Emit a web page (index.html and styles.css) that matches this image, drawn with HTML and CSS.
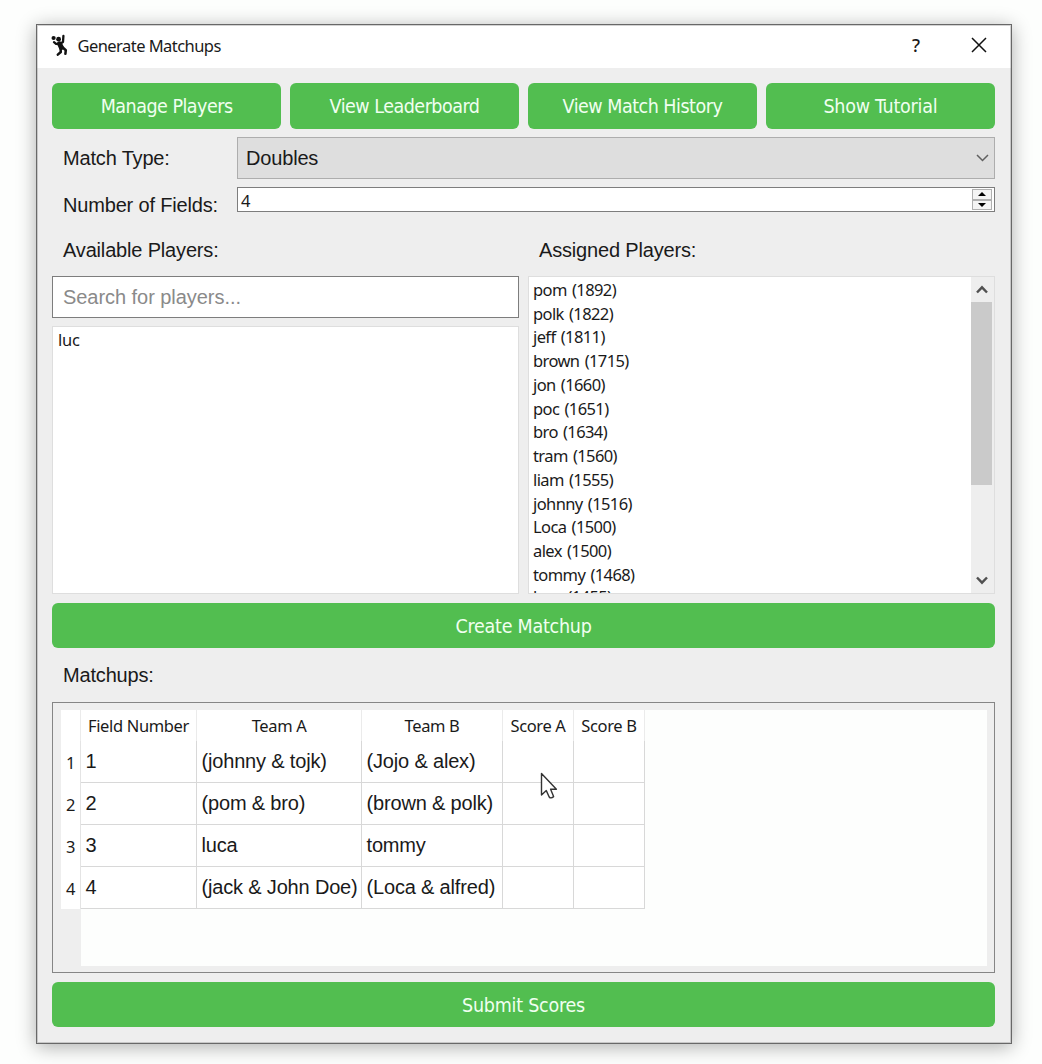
FILE: index.html
```html
<!DOCTYPE html>
<html lang="en">
<head>
<meta charset="utf-8">
<title>Generate Matchups</title>
<link rel="stylesheet" href="styles.css">
</head>
<body>
<main class="window">
  <header class="titlebar">
    <svg class="app-icon" width="18" height="23" viewBox="0 0 18 23" fill="none" stroke="#111" stroke-linecap="round" stroke-linejoin="round">
      <circle cx="2.6" cy="4" r="2.1" fill="#111" stroke="none"/>
      <circle cx="7.6" cy="5.2" r="2.4" fill="#111" stroke="none"/>
      <path d="M3 8.2 5 9.8 8.5 10 12 8 12.4 2" stroke-width="2.3"/>
      <path d="M8.6 9.8 10.4 13.6" stroke-width="5"/>
      <path d="M9.6 14.5 9.8 18 6.8 20.6M11.8 13.5 14.8 16.2 14.4 19.8" stroke-width="2.5"/>
    </svg>
    <h1 class="title">Generate Matchups</h1>
    <span class="help">?</span>
    <svg class="close" width="16" height="16" viewBox="0 0 16 16" fill="none" stroke="#111" stroke-width="1.5"><path d="M1 1 15 15M15 1 1 15"/></svg>
  </header>
  <div class="content">
    <nav class="toolbar">
      <button class="btn">Manage Players</button>
      <button class="btn">View Leaderboard</button>
      <button class="btn">View Match History</button>
      <button class="btn wide">Show Tutorial</button>
    </nav>
    <div class="form">
      <span class="label">Match Type:</span>
      <div class="combo"><span>Doubles</span>
        <svg width="13" height="8" viewBox="0 0 13 8" fill="none" stroke="#606060" stroke-width="1.5"><path d="M1 1 6.5 6.5 12 1"/></svg>
      </div>
      <span class="label label-fields">Number of Fields:</span>
      <div class="spin"><span>4</span>
        <div class="steps">
          <i><svg width="8" height="4" viewBox="0 0 8 4"><path d="M0 4 4 0 8 4Z"/></svg></i>
          <i><svg width="8" height="4" viewBox="0 0 8 4"><path d="M0 0 4 4 8 0Z"/></svg></i>
        </div>
      </div>
    </div>
    <div class="players">
      <section class="available">
        <h2 class="label">Available Players:</h2>
        <div class="search">Search for players...</div>
        <ul class="list"><li>luc</li></ul>
      </section>
      <section class="assigned">
        <h2 class="label">Assigned Players:</h2>
        <div class="list-box">
          <ul class="list">
            <li>pom (1892)</li><li>polk (1822)</li><li>jeff (1811)</li><li>brown (1715)</li><li>jon (1660)</li><li>poc (1651)</li><li>bro (1634)</li><li>tram (1560)</li><li>liam (1555)</li><li>johnny (1516)</li><li>Loca (1500)</li><li>alex (1500)</li><li>tommy (1468)</li><li class="partial">luca (1455)</li>
          </ul>
          <div class="scrollbar">
            <svg width="12" height="9" viewBox="0 0 12 9" fill="none" stroke="#505050" stroke-width="2.4"><path d="M1 7.5 6 2.3 11 7.5"/></svg>
            <div class="track"><div class="thumb"></div></div>
            <svg width="12" height="9" viewBox="0 0 12 9" fill="none" stroke="#505050" stroke-width="2.4"><path d="M1 1.5 6 6.7 11 1.5"/></svg>
          </div>
        </div>
      </section>
    </div>
    <button class="btn b-create wide">Create Matchup</button>
    <h2 class="label matchups-label">Matchups:</h2>
    <div class="table-frame">
      <div class="table-view">
        <table>
          <colgroup><col class="c-row"><col class="c-field"><col class="c-a"><col class="c-b"><col class="c-score"><col class="c-score"></colgroup>
          <thead><tr><th></th><th>Field Number</th><th>Team A</th><th>Team B</th><th>Score A</th><th>Score B</th></tr></thead>
          <tbody>
            <tr><th>1</th><td>1</td><td>(johnny &amp; tojk)</td><td>(Jojo &amp; alex)</td><td></td><td></td></tr>
            <tr><th>2</th><td>2</td><td>(pom &amp; bro)</td><td>(brown &amp; polk)</td><td></td><td></td></tr>
            <tr><th>3</th><td>3</td><td>luca</td><td>tommy</td><td></td><td></td></tr>
            <tr><th>4</th><td>4</td><td>(jack &amp; John Doe)</td><td>(Loca &amp; alfred)</td><td></td><td></td></tr>
          </tbody>
        </table>
        <div class="below"></div>
      </div>
    </div>
    <button class="btn b-submit wide">Submit Scores</button>
  </div>
</main>
<svg class="cursor" width="18" height="28" viewBox="0 0 18 28"><path d="M1.5 1.5V23L6.3 18.6 9.2 25Q10.8 27 13.6 24.6L10.6 17.2H16.4Z" fill="#fff" stroke="#333" stroke-width="1.4" stroke-linejoin="round"/></svg>
</body>
</html>
```
FILE: styles.css
```css
* { box-sizing: border-box; }
body {
  margin: 0;
  padding: 24px 30px 19px 36px;
  width: 1042px;
  height: 1064px;
  overflow: hidden;
  background: #fdfefd;
  font-family: "Liberation Sans", Arial, sans-serif;
  font-size: 20px;
  letter-spacing: -0.17px;
  color: #1a1a1a;
}
h1, h2, ul { margin: 0; padding: 0; font-weight: 400; list-style: none; }
.window {
  width: 976px;
  height: 1020px;
  border: 1px solid #686868;
  outline: 1px solid rgba(110, 110, 110, 0.3);
  outline-offset: -2px;
  background: #eeeeee;
  box-shadow: 0 3px 18px rgba(0, 0, 0, 0.32);
}
.titlebar {
  height: 43px;
  background: #fff;
  display: flex;
  align-items: center;
  padding: 0 24px 3px 14px;
  font-family: "Noto Sans", "Open Sans", sans-serif;
}
.title { font-size: 16.5px; letter-spacing: -0.55px; margin-left: 8.5px; flex: 1; white-space: nowrap; }
.help { font-size: 18px; font-weight: 500; margin-right: 51px; }
.content { padding: 15px 16px 0 15px; }
.toolbar { display: grid; grid-template-columns: repeat(4, 1fr); gap: 8.6px; }
.btn {
  display: block;
  width: 100%;
  height: 45.5px;
  border: 0;
  border-radius: 6px;
  padding: 2px 0 0;
  background: #52be50;
  color: #f0fff0;
  font: 19.5px "DejaVu Sans Condensed", "DejaVu Sans", sans-serif;
  font-stretch: condensed;
  letter-spacing: -0.5px;
  white-space: nowrap;
}
.wide { letter-spacing: -0.25px; }
.label { display: block; padding-left: 11px; font-size: 20px; white-space: nowrap; }
.form { display: grid; grid-template-columns: 185px 1fr; row-gap: 8px; margin-top: 8.5px; }
.form .label { line-height: 42px; }
.form .label-fields { line-height: 37px; height: 26px; }
.combo {
  height: 42px;
  border: 1px solid #adadad;
  background: #dedede;
  display: flex;
  align-items: center;
  justify-content: space-between;
  padding: 0 5px 0 8px;
}
.spin {
  height: 25px;
  border: 1px solid #7d7d7d;
  background: #fff;
  display: flex;
  justify-content: space-between;
  font: 16.5px/26px "Noto Sans", "Open Sans", sans-serif;
  padding-left: 3px;
}
.steps { width: 20px; margin: 1px 2px 1px 0; display: grid; grid-template-rows: 1fr 1fr; }
.steps i { border: 1px solid #b0b0b0; background: #f4f4f4; display: flex; align-items: center; justify-content: center; }
.steps svg { display: block; }
.players { display: grid; grid-template-columns: 1fr 1fr; gap: 9px; }
.players .label { line-height: 42px; height: 63px; padding-top: 16px; }
.search {
  height: 42px;
  border: 1px solid #7d7d7d;
  background: #fff;
  color: #8a8a8a;
  line-height: 41px;
  padding-left: 10px;
  margin-bottom: 8px;
  letter-spacing: -0.05px;
}
.list { font: 16.5px/23.74px "Noto Sans", "Open Sans", sans-serif; letter-spacing: -0.6px; word-spacing: 1.5px; white-space: nowrap; }
.available .list { height: 268px; border: 1px solid #dedede; background: #fff; padding: 1px 5px; letter-spacing: -0.2px; }
.list-box { height: 318px; border: 1px solid #dedede; background: #fff; display: flex; overflow: hidden; }
.list-box .list { flex: 1; padding: 1px 4px; }
.list .partial { margin-top: -2px; }
.scrollbar { width: 23px; padding-right: 2px; background: #eeeeee; display: flex; flex-direction: column; align-items: center; }
.scrollbar svg { margin: 8px 0; flex: none; }
.track { flex: 1; width: 100%; }
.thumb { height: 183px; background: #cacaca; }
.b-create { margin-top: 8.5px; }
.matchups-label { line-height: 54px; height: 54px; }
.table-frame { height: 271px; border: 1px solid #858585; padding: 7px 7px 7px 8px; }
.table-view { width: 926px; height: 256px; background: #fdfefd; display: flex; flex-direction: column; }
table { width: 584px; border-collapse: separate; border-spacing: 0; table-layout: fixed; }
.c-row { width: 20px; } .c-field { width: 116px; } .c-a { width: 165px; } .c-b { width: 141px; } .c-score { width: 71px; }
th, td { padding: 0; overflow: visible; white-space: nowrap; border-right: 1px solid #d8d8d8; background: #fff; }
th { font: 16.5px "Noto Sans", "Open Sans", sans-serif; letter-spacing: -0.35px; }
thead th { height: 31px; border-right-color: #ebebeb; }
td { height: 42px; padding-left: 4.5px; border-bottom: 1px solid #d8d8d8; }
tbody th { border-right-color: #e4e4e4; padding-top: 1px; }
.below { width: 20px; flex: 1; background: #eeeeee; }
.b-submit { margin-top: 8.5px; }
.cursor { position: absolute; left: 540px; top: 772px; }
```
